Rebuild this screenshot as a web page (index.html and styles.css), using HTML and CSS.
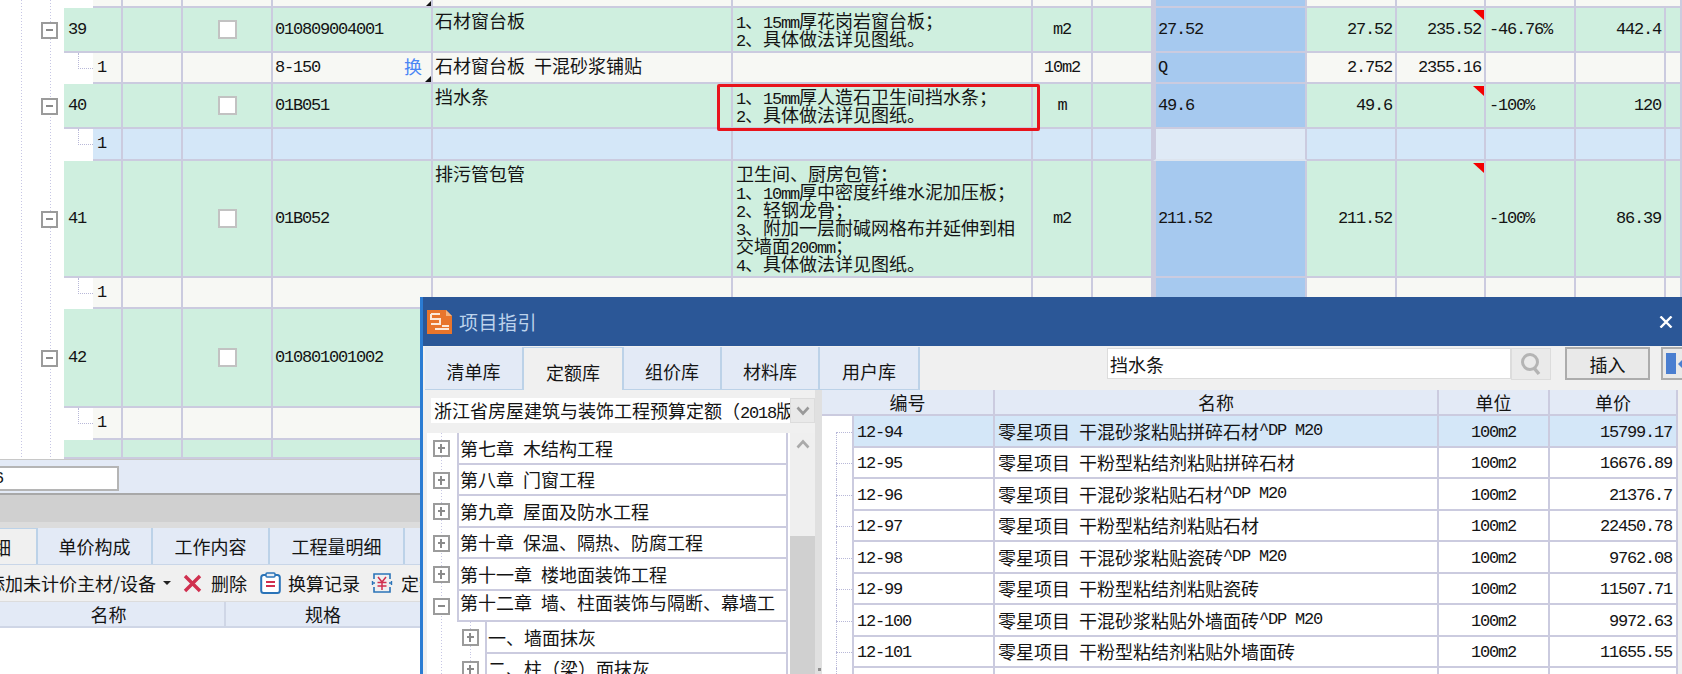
FILE: index.html
```html
<!DOCTYPE html>
<html lang="zh-CN">
<head>
    <meta charset="UTF-8">
    <meta name="viewport" content="width=device-width, initial-scale=1.0">
    <title>项目指引</title>
    <link rel="stylesheet" href="styles.css">
</head>
<body>
    <section class="sheet">
        <div class="row sub sliver">
            <div class="seq"><span class="gutter"></span><span class="no"></span></div>
            <div class="cell"></div><div class="cell"></div>
            <div class="cell code"><i class="mark-black"></i></div>
            <div class="cell"></div><div class="cell"></div><div class="cell"></div><div class="cell"></div>
            <div class="cell qty"></div><div class="cell"></div><div class="cell"></div><div class="cell"></div><div class="cell"></div>
        </div>

        <div class="row item h45">
            <div class="seq"><span class="gutter"><span class="fold"></span></span><span class="no n">39</span></div>
            <div class="cell"></div>
            <div class="cell check"><span class="box"></span></div>
            <div class="cell code n">010809004001</div>
            <div class="cell text">石材窗台板</div>
            <div class="cell text desc"><span class="n">1</span>、<span class="n">15mm</span>厚花岗岩窗台板；<br><span class="n">2</span>、具体做法详见图纸。</div>
            <div class="cell unit n">m2</div>
            <div class="cell"></div>
            <div class="cell qty n">27.52</div>
            <div class="cell right n">27.52</div>
            <div class="cell right n"><i class="mark-red"></i>235.52</div>
            <div class="cell left n">-46.76%</div>
            <div class="cell right n">442.4</div>
            <div class="cell"></div>
        </div>
        <div class="row sub h31">
            <div class="seq"><span class="gutter elbow"></span><span class="no n">1</span></div>
            <div class="cell"></div>
            <div class="cell"></div>
            <div class="cell code n">8-150<span class="swap">换</span><i class="mark-black"></i></div>
            <div class="cell text">石材窗台板 干混砂浆铺贴</div>
            <div class="cell"></div>
            <div class="cell unit n">10m2</div>
            <div class="cell"></div>
            <div class="cell qty n">Q</div>
            <div class="cell right n">2.752</div>
            <div class="cell right n">2355.16</div>
            <div class="cell"></div>
            <div class="cell"></div>
            <div class="cell"></div>
        </div>

        <div class="row item h45">
            <div class="seq"><span class="gutter"><span class="fold"></span></span><span class="no n">40</span></div>
            <div class="cell"></div>
            <div class="cell check"><span class="box"></span></div>
            <div class="cell code n">01B051</div>
            <div class="cell text">挡水条</div>
            <div class="cell text desc"><span class="n">1</span>、<span class="n">15mm</span>厚人造石卫生间挡水条；<br><span class="n">2</span>、具体做法详见图纸。</div>
            <div class="cell unit n">m</div>
            <div class="cell"></div>
            <div class="cell qty n">49.6</div>
            <div class="cell right n">49.6</div>
            <div class="cell right n"><i class="mark-red"></i></div>
            <div class="cell left n">-100%</div>
            <div class="cell right n">120</div>
            <div class="cell"></div>
        </div>
        <div class="row sub picked h32">
            <div class="seq"><span class="gutter elbow"></span><span class="no n">1</span></div>
            <div class="cell"></div><div class="cell"></div><div class="cell"></div><div class="cell"></div><div class="cell"></div><div class="cell"></div><div class="cell"></div>
            <div class="cell qty"></div>
            <div class="cell"></div><div class="cell"></div><div class="cell"></div><div class="cell"></div><div class="cell"></div>
        </div>

        <div class="row item h117">
            <div class="seq"><span class="gutter"><span class="fold"></span></span><span class="no n">41</span></div>
            <div class="cell"></div>
            <div class="cell check"><span class="box"></span></div>
            <div class="cell code n">01B052</div>
            <div class="cell text">排污管包管</div>
            <div class="cell text desc">卫生间、厨房包管：<br><span class="n">1</span>、<span class="n">10mm</span>厚中密度纤维水泥加压板；<br><span class="n">2</span>、轻钢龙骨；<br><span class="n">3</span>、附加一层耐碱网格布并延伸到相<br>交墙面<span class="n">200mm</span>；<br><span class="n">4</span>、具体做法详见图纸。</div>
            <div class="cell unit n">m2</div>
            <div class="cell"></div>
            <div class="cell qty n">211.52</div>
            <div class="cell right n">211.52</div>
            <div class="cell right n"><i class="mark-red"></i></div>
            <div class="cell left n">-100%</div>
            <div class="cell right n">86.39</div>
            <div class="cell"></div>
        </div>
        <div class="row sub h31">
            <div class="seq"><span class="gutter elbow"></span><span class="no n">1</span></div>
            <div class="cell"></div><div class="cell"></div><div class="cell"></div><div class="cell"></div><div class="cell"></div><div class="cell"></div><div class="cell"></div>
            <div class="cell qty"></div>
            <div class="cell"></div><div class="cell"></div><div class="cell"></div><div class="cell"></div><div class="cell"></div>
        </div>

        <div class="row item h99">
            <div class="seq"><span class="gutter"><span class="fold"></span></span><span class="no n">42</span></div>
            <div class="cell"></div>
            <div class="cell check"><span class="box"></span></div>
            <div class="cell code n">010801001002</div>
            <div class="cell"></div><div class="cell"></div><div class="cell"></div><div class="cell"></div>
            <div class="cell qty"></div>
            <div class="cell"></div><div class="cell"></div><div class="cell"></div><div class="cell"></div><div class="cell"></div>
        </div>
        <div class="row sub h32">
            <div class="seq"><span class="gutter elbow"></span><span class="no n">1</span></div>
            <div class="cell"></div><div class="cell"></div><div class="cell"></div><div class="cell"></div><div class="cell"></div><div class="cell"></div><div class="cell"></div>
            <div class="cell qty"></div>
            <div class="cell"></div><div class="cell"></div><div class="cell"></div><div class="cell"></div><div class="cell"></div>
        </div>
        <div class="row item h19">
            <div class="seq"><span class="gutter"></span><span class="no"></span></div>
            <div class="cell"></div><div class="cell"></div><div class="cell"></div><div class="cell"></div><div class="cell"></div><div class="cell"></div><div class="cell"></div>
            <div class="cell qty"></div>
            <div class="cell"></div><div class="cell"></div><div class="cell"></div><div class="cell"></div><div class="cell"></div>
        </div>

        <div class="red-box"></div>
    </section>

    <section class="lower">
        <div class="filter-bar"><div class="filter-input n">6</div></div>
        <div class="gray-band"></div>
        <div class="lower-tabs">
            <div class="lower-tab active">细</div>
            <div class="lower-tab w115">单价构成</div>
            <div class="lower-tab w117">工作内容</div>
            <div class="lower-tab w135">工程量明细</div>
        </div>
        <div class="toolbar">
            <span class="tool-first">添加未计价主材/设备</span>
            <span class="caret"></span>
            <svg class="tool-x" width="19" height="19" viewBox="0 0 19 19"><path d="M2 2l15 15M17 2L2 17" stroke="#d0304f" stroke-width="3.4" fill="none"/></svg>
            <span class="tool-del">删除</span>
            <svg class="tool-clip" width="21" height="22" viewBox="0 0 21 22"><rect x="1.2" y="3" width="18.6" height="18" rx="2.5" fill="#fff" stroke="#2b74b8" stroke-width="2"/><rect x="6" y="1" width="9" height="4" rx="1" fill="#e8eef6" stroke="#2b74b8" stroke-width="1.5"/><path d="M6 10h9M6 14h9" stroke="#d0304f" stroke-width="2"/></svg>
            <span class="tool-rec">换算记录</span>
            <svg class="tool-yen" width="22" height="22" viewBox="0 0 22 22"><path d="M3 7V2h16v5M3 15v5h16v-5" fill="none" stroke="#2b74b8" stroke-width="1.6"/><path d="M1 11h3M18 11h3M1.500 9v4M20.500 9v4" stroke="#2b74b8" stroke-width="1.400"/><path d="M7 5l4 5 4-5M6.500 10.500h9M6.500 14h9M11 10v8" fill="none" stroke="#d0304f" stroke-width="1.500"/></svg>
            <span>定额</span>
        </div>
        <div class="lower-head">
            <div class="head-name">名称</div>
            <div class="head-spec">规格</div>
        </div>
    </section>

    <section class="guide">
        <header class="guide-title">
            <svg width="25" height="25" viewBox="0 0 25 25">
                <path d="M0 1h19l6 6v18H0z" fill="#e8752c"/>
                <path d="M19 1l6 6h-6z" fill="#f4b27c"/>
                <path d="M4 5h9M4 5v5h9v5H4M15 17h7M8 20h14" stroke="#fbe9da" stroke-width="2" fill="none"/>
            </svg>
            <h1>项目指引</h1>
            <svg class="guide-close" width="14" height="12" viewBox="0 0 14 12"><path d="M1.500 0.500l11 11M12.500 0.500l-11 11" stroke="#fff" stroke-width="2.400"/></svg>
        </header>

        <div class="guide-strip">
            <div class="guide-tab w99">清单库</div>
            <div class="guide-tab w100 active">定额库</div>
            <div class="guide-tab w98">组价库</div>
            <div class="guide-tab w98">材料库</div>
            <div class="guide-tab w100">用户库</div>
            <div class="search-input">挡水条</div>
            <div class="search-btn">
                <svg width="22" height="24" viewBox="0 0 22 24"><circle cx="10" cy="10" r="7.500" fill="none" stroke="#b4b4b4" stroke-width="3"/><path d="M14 16l5 6" stroke="#b4b4b4" stroke-width="3.500"/></svg>
            </div>
            <div class="insert-btn">插入</div>
            <div class="next-btn"><span class="next-block"></span><span class="next-arrow"></span></div>
        </div>

        <div class="guide-body">
            <div class="lib">
                <div class="combo">
                    <div class="combo-text">浙江省房屋建筑与装饰工程预算定额（<span class="n">2018</span>版</div>
                    <div class="combo-btn"><svg width="14" height="10" viewBox="0 0 14 10"><path d="M1.500 1.500L7 7.500l5.500-6" fill="none" stroke="#999" stroke-width="2.600"/></svg></div>
                </div>
                <div class="lib-main">
                    <div class="chapters">
                        <div class="chapter"><span class="chapter-gutter"><span class="fold plus"></span></span><span class="chapter-name">第七章 木结构工程</span></div>
                        <div class="chapter"><span class="chapter-gutter"><span class="fold plus"></span></span><span class="chapter-name">第八章 门窗工程</span></div>
                        <div class="chapter"><span class="chapter-gutter"><span class="fold plus"></span></span><span class="chapter-name">第九章 屋面及防水工程</span></div>
                        <div class="chapter"><span class="chapter-gutter"><span class="fold plus"></span></span><span class="chapter-name">第十章 保温、隔热、防腐工程</span></div>
                        <div class="chapter"><span class="chapter-gutter"><span class="fold plus"></span></span><span class="chapter-name">第十一章 楼地面装饰工程</span></div>
                        <div class="chapter open"><span class="chapter-gutter"><span class="fold"></span></span><span class="chapter-name">第十二章 墙、柱面装饰与隔断、幕墙工</span></div>
                        <div class="chapter child"><span class="chapter-gutter"><span class="fold plus"></span></span><span class="chapter-name">一、墙面抹灰</span></div>
                        <div class="chapter child"><span class="chapter-gutter"><span class="fold plus"></span></span><span class="chapter-name">二、柱（梁）面抹灰</span></div>
                    </div>
                    <div class="scroll">
                        <div class="scroll-thumb"><svg width="14" height="10" viewBox="0 0 14 10"><path d="M1.500 8.500L7 2.500l5.500 6" fill="none" stroke="#aaa" stroke-width="2.600"/></svg></div>
                    </div>
                </div>
            </div>
            <div class="splitter"><span class="splitter-dot"></span></div>

            <div class="quota">
                <div class="quota-row quota-head">
                    <div class="q-code-head">编号</div>
                    <div class="q-cell center">名称</div>
                    <div class="q-cell center">单位</div>
                    <div class="q-cell center">单价</div>
                </div>
                <div class="quota-row selected first">
                    <div class="q-leaf"></div><div class="q-cell q-code n">12-94</div>
                    <div class="q-cell">零星项目 干混砂浆粘贴拼碎石材<span class="n">^DP M20</span></div>
                    <div class="q-cell center n">100m2</div><div class="q-cell num n">15799.17</div>
                </div>
                <div class="quota-row">
                    <div class="q-leaf"></div><div class="q-cell q-code n">12-95</div>
                    <div class="q-cell">零星项目 干粉型粘结剂粘贴拼碎石材</div>
                    <div class="q-cell center n">100m2</div><div class="q-cell num n">16676.89</div>
                </div>
                <div class="quota-row">
                    <div class="q-leaf"></div><div class="q-cell q-code n">12-96</div>
                    <div class="q-cell">零星项目 干混砂浆粘贴石材<span class="n">^DP M20</span></div>
                    <div class="q-cell center n">100m2</div><div class="q-cell num n">21376.7</div>
                </div>
                <div class="quota-row">
                    <div class="q-leaf"></div><div class="q-cell q-code n">12-97</div>
                    <div class="q-cell">零星项目 干粉型粘结剂粘贴石材</div>
                    <div class="q-cell center n">100m2</div><div class="q-cell num n">22450.78</div>
                </div>
                <div class="quota-row">
                    <div class="q-leaf"></div><div class="q-cell q-code n">12-98</div>
                    <div class="q-cell">零星项目 干混砂浆粘贴瓷砖<span class="n">^DP M20</span></div>
                    <div class="q-cell center n">100m2</div><div class="q-cell num n">9762.08</div>
                </div>
                <div class="quota-row">
                    <div class="q-leaf"></div><div class="q-cell q-code n">12-99</div>
                    <div class="q-cell">零星项目 干粉型粘结剂粘贴瓷砖</div>
                    <div class="q-cell center n">100m2</div><div class="q-cell num n">11507.71</div>
                </div>
                <div class="quota-row">
                    <div class="q-leaf"></div><div class="q-cell q-code n">12-100</div>
                    <div class="q-cell">零星项目 干混砂浆粘贴外墙面砖<span class="n">^DP M20</span></div>
                    <div class="q-cell center n">100m2</div><div class="q-cell num n">9972.63</div>
                </div>
                <div class="quota-row">
                    <div class="q-leaf"></div><div class="q-cell q-code n">12-101</div>
                    <div class="q-cell">零星项目 干粉型粘结剂粘贴外墙面砖</div>
                    <div class="q-cell center n">100m2</div><div class="q-cell num n">11655.55</div>
                </div>
                <div class="quota-row">
                    <div class="q-leaf"></div><div class="q-cell q-code"></div>
                    <div class="q-cell"></div><div class="q-cell"></div><div class="q-cell"></div>
                </div>
            </div>
        </div>
    </section>
</body>
</html>
```

FILE: styles.css
```css
* {
    margin: 0;
    padding: 0;
    box-sizing: border-box;
}

html, body {
    width: 1682px;
    height: 674px;
    overflow: hidden;
}

body {
    position: relative;
    background-color: #fff;
    color: #141414;
    font-family: "Noto Sans CJK SC", "Liberation Sans", sans-serif;
    font-size: 18px;
    line-height: 18px;
    word-spacing: 5px;
}

/* half-width digits and latin, squeezed to the 9px advance of the cjk half cell */
.n {
    font-family: "Liberation Mono", monospace;
    font-size: 17px;
    letter-spacing: -1.2px;
    word-spacing: 0;
}

.text .n,
.combo-text .n,
.q-cell .n {
    line-height: 0;
}

/* ---- main sheet ---- */
.sheet {
    position: relative;
    height: 459px;
    overflow: hidden;
    background-image:
        linear-gradient(#c6c6e4 50%, transparent 50%),
        linear-gradient(#c6c6e4 50%, transparent 50%);
    background-size: 1px 3px;
    background-position: 21px 0, 50px 0;
    background-repeat: repeat-y;
}

.row {
    display: grid;
    grid-template-columns: 123px 60px 90px 160px 300px 300px 60px 60px 154px 90px 89px 90px 90px 16px;
}

.item { --bg: #cfefdf; }
.sub { --bg: #f7f8f4; }
.picked { --bg: #d4e7f8; }

.sliver { height: 8px; grid-template-columns: 123px 60px 90px 160px 300px 300px 60px 60px 154px 90px 89px 90px 106px; }
.h19 { height: 19px; }
.h31 { height: 31px; }
.h32 { height: 32px; }
.h45 { height: 45px; }
.h99 { height: 99px; }
.h117 { height: 117px; }

.seq {
    display: flex;
}

.gutter {
    position: relative;
    display: flex;
    align-items: center;
    justify-content: flex-end;
    width: 64px;
    flex-shrink: 0;
    padding-right: 6px;
}

.sub .gutter {
    width: 93px;
}

.elbow::before {
    content: "";
    position: absolute;
    left: 78px;
    top: 0;
    width: 14px;
    height: 15px;
    border-left: 1px dotted #b8b8d8;
    border-bottom: 1px dotted #b8b8d8;
}

.no {
    flex: 1;
    display: flex;
    align-items: center;
    padding-left: 4px;
    background-color: var(--bg);
    border-right: 2px solid #cbcbdf;
    border-bottom: 2px solid #cbcbdf;
}

.fold {
    position: relative;
    display: block;
    width: 17px;
    height: 17px;
    background-color: #fff;
    border: 2px solid #9b9b9b;
    flex-shrink: 0;
}

.fold::before {
    content: "";
    position: absolute;
    left: 3px;
    right: 3px;
    top: 5px;
    height: 2px;
    background-color: #8a8a8a;
}

.fold.plus::after {
    content: "";
    position: absolute;
    top: 2px;
    bottom: 2px;
    left: 5px;
    width: 2px;
    background-color: #8a8a8a;
}

.cell {
    position: relative;
    display: flex;
    align-items: center;
    background-color: var(--bg);
    border-right: 2px solid #cbcbdf;
    border-bottom: 2px solid #cbcbdf;
    white-space: nowrap;
    overflow: hidden;
}

.code { padding-left: 2px; }

.text {
    display: block;
    padding: 3px 0 0 2px;
    line-height: 18px;
}

.desc { padding-left: 3px; }

.unit { justify-content: center; }
.left { padding-left: 3px; }

.right {
    justify-content: flex-end;
    padding-right: 3px;
}

.check { justify-content: center; }

.box {
    display: block;
    width: 19px;
    height: 19px;
    background-color: #fff;
    border: 2px solid #c2c2c2;
}

.qty {
    background-color: #a6c9ef;
    border-left: 3px solid #cbcbdf;
    padding-left: 2px;
}

.picked .qty {
    background-color: #dfeaf6;
    border-bottom-color: #dde4ee;
}

.swap {
    position: absolute;
    right: 9px;
    top: 4px;
    font-family: "Noto Sans CJK SC", sans-serif;
    font-size: 18px;
    letter-spacing: 0;
    color: #4a86f5;
}

.mark-black {
    position: absolute;
    right: 0;
    bottom: 0;
    border-left: 6px solid transparent;
    border-bottom: 6px solid #111;
}

.sliver .mark-black {
    bottom: 0;
    border-left-width: 5px;
    border-bottom-width: 5px;
}

.mark-red {
    position: absolute;
    right: 0;
    top: 2px;
    border-left: 11px solid transparent;
    border-top: 10px solid #f40000;
}

.red-box {
    position: absolute;
    left: 717px;
    top: 84px;
    width: 323px;
    height: 47px;
    border: 3px solid #e8141c;
    border-radius: 2px;
}

/* ---- panel under the sheet ---- */
.filter-bar {
    height: 36px;
    background-color: #e3eaf6;
    border-top: 1px solid #c8c8c8;
    border-bottom: 2px solid #a8a8a8;
    padding-top: 6px;
}

.filter-input {
    display: flex;
    align-items: center;
    justify-content: flex-start;
    width: 119px;
    height: 25px;
    background-color: #fff;
    border: 2px solid #b5b5b5;
    border-left: 0;
    text-indent: -6px;
}

.gray-band {
    height: 33px;
    background-color: #d0d0d0;
    border-bottom: 6px solid #dcdcdc;
}

.lower-tabs {
    display: flex;
    height: 37px;
    background-color: #e3eaf6;
    border-bottom: 1px solid #c9d6e8;
}

.lower-tab {
    display: flex;
    align-items: center;
    justify-content: center;
    border-right: 2px solid #bcd2e8;
}

.lower-tab.active {
    justify-content: flex-end;
    width: 38px;
    padding-right: 25px;
    background-color: #f0f0f0;
    border-top: 1px solid #bcd2e8;
    white-space: nowrap;
}

.w115 { width: 115px; }
.w117 { width: 117px; }
.w135 { width: 135px; }

.toolbar {
    display: flex;
    align-items: center;
    height: 36px;
    background-color: #f0f0f0;
    white-space: nowrap;
}

.tool-first { margin-left: -13px; }

.caret {
    margin-left: 7px;
    border-left: 4px solid transparent;
    border-right: 4px solid transparent;
    border-top: 4px solid #222;
}

.tool-x { margin-left: 12px; }
.tool-del { margin-left: 9px; }
.tool-clip { margin-left: 13px; }
.tool-rec { margin-left: 7px; }
.tool-yen { margin-left: 11px; }
.tool-yen + span { margin-left: 8px; }

.lower-head {
    display: flex;
    height: 27px;
    align-items: center;
    background-color: #e3eaf6;
    border-top: 1px solid #dcdcdc;
    border-bottom: 2px solid #cfd6e6;
    text-align: center;
}

.head-name {
    width: 226px;
    height: 100%;
    line-height: 24px;
    border-right: 2px solid #cfd6e6;
    padding-right: 7px;
}

.head-spec {
    width: 194px;
    line-height: 24px;
}

/* ---- floating dialog ---- */
.guide {
    position: absolute;
    left: 420px;
    top: 297px;
    width: 1262px;
    height: 377px;
    overflow: hidden;
    background-color: #f0f0f0;
    border-left: 3px solid #2b7cd3;
}

.guide-title {
    display: flex;
    align-items: center;
    height: 49px;
    padding-left: 4px;
    background-color: #2b5797;
}

.guide-title h1 {
    margin-left: 7px;
    font-size: 19px;
    font-weight: normal;
    letter-spacing: 0.5px;
    color: #bdd3ec;
}

.guide-close {
    margin-left: auto;
    margin-right: 9px;
}

.guide-strip {
    display: flex;
    height: 44px;
    padding: 1px 0 0 2px;
    white-space: nowrap;
}

.guide-strip > div {
    flex-shrink: 0;
}

.guide-tab {
    display: flex;
    align-items: center;
    justify-content: center;
    height: 43px;
    padding-top: 5px;
    background-color: #e3eaf6;
    border-right: 2px solid #bcd2e8;
    border-bottom: 1px solid #bcd2e8;
}

.guide-tab.active {
    background-color: #f0f0f0;
    border-bottom: 0;
    border-top: 1px solid #bcd2e8;
}

.w99 { width: 99px; }
.w100 { width: 100px; }
.w98 { width: 98px; }

.search-input {
    width: 404px;
    height: 31px;
    margin: 1px 0 0 187px;
    padding: 6px 0 0 2px;
    background-color: #fff;
    border: 1px solid #dcdcdc;
}

.search-btn {
    display: flex;
    align-items: center;
    justify-content: center;
    width: 40px;
    height: 32px;
    margin-top: 1px;
    background-color: #eaeaea;
    border: 1px solid #dcdcdc;
}

.insert-btn {
    display: flex;
    align-items: center;
    justify-content: center;
    width: 85px;
    height: 33px;
    margin: 0 0 0 14px;
    background-color: #e9e9e9;
    border: 2px solid #acacac;
}

.next-btn {
    display: flex;
    align-items: center;
    width: 30px;
    height: 33px;
    margin-left: 11px;
    padding-left: 3px;
    background-color: #e9e9e9;
    border: 2px solid #acacac;
}

.next-block {
    display: block;
    width: 10px;
    height: 21px;
    background-color: #4a7ed0;
}

.next-arrow {
    margin-left: 2px;
    border-top: 5px solid transparent;
    border-bottom: 5px solid transparent;
    border-right: 5px solid #4a7ed0;
}

.guide-body {
    display: flex;
    height: 284px;
}

.lib {
    width: 392px;
    flex-shrink: 0;
}

.combo {
    display: flex;
    height: 25px;
    margin: 8px 0 10px 8px;
}

.combo-text {
    width: 359px;
    padding: 3px 0 0 3px;
    background-color: #fff;
    white-space: nowrap;
    overflow: hidden;
}

.combo-btn {
    display: flex;
    align-items: center;
    justify-content: center;
    flex: 1;
    background-color: #e9e9e9;
    border: 1px solid #dcdcdc;
}

.lib-main {
    display: flex;
    height: 241px;
    margin-left: 4px;
}

.chapters {
    width: 363px;
    background-color: #fff;
    background-image: linear-gradient(#c6c6e4 50%, transparent 50%);
    background-size: 1px 3px;
    background-position: 14px 0;
    background-repeat: repeat-y;
}

.chapter {
    display: flex;
    height: 31.5px;
}

.chapter-gutter {
    display: flex;
    align-items: center;
    width: 30px;
    flex-shrink: 0;
    padding-left: 6px;
}

.chapter-name {
    flex: 1;
    display: flex;
    align-items: center;
    padding-left: 1px;
    margin-right: 2px;
    background-color: #fff;
    border-left: 2px solid #cbcbdf;
    border-right: 2px solid #cbcbdf;
    border-bottom: 2px solid #cbcbdf;
    white-space: pre;
    overflow: hidden;
}

.open .chapter-name {
    padding-bottom: 6px;
}

.child .chapter-gutter {
    width: 58px;
    padding-left: 35px;
    background-image: linear-gradient(#c6c6e4 50%, transparent 50%);
    background-size: 1px 3px;
    background-position: 43px 0;
    background-repeat: repeat-y;
}

.scroll {
    flex: 1;
    background-color: #d0d0d0;
}

.scroll-thumb {
    display: flex;
    justify-content: center;
    height: 103px;
    padding-top: 6px;
    background-color: #efefef;
}

.splitter {
    position: relative;
    width: 7px;
    background-color: #e0e0e0;
}

.splitter-dot {
    position: absolute;
    left: 3px;
    bottom: 3px;
    width: 3px;
    height: 3px;
    background-color: #8f8f8f;
}

.quota {
    width: 856px;
    background-color: #fff;
}

.quota-row {
    display: grid;
    grid-template-columns: 30px 143px 444px 111px 128px;
    height: 31.500px;
    white-space: nowrap;
}

.quota-head {
    display: grid;
    grid-template-columns: 173px 444px 111px 128px;
    height: 26px;
    background-color: #e3eaf6;
    border-bottom: 2px solid #cbcbdf;
}

.q-code-head {
    display: flex;
    align-items: center;
    justify-content: center;
    border-right: 2px solid #cbcbdf;
}

.quota-head .q-cell {
    border-bottom: 0;
}

.q-leaf {
    position: relative;
}

.q-leaf::before {
    content: "";
    position: absolute;
    left: 14px;
    top: 0;
    bottom: 0;
    border-left: 1px dotted #b8b8d8;
}

.q-leaf::after {
    content: "";
    position: absolute;
    left: 14px;
    right: 0;
    top: 50%;
    border-top: 1px dotted #b8b8d8;
}

.first .q-leaf::before {
    top: 50%;
}

.q-cell {
    display: flex;
    align-items: center;
    padding-left: 3px;
    border-right: 2px solid #cbcbdf;
    border-bottom: 2px solid #cbcbdf;
    overflow: hidden;
}

.q-cell.n {
    padding-top: 4px;
}

.q-code {
    padding-left: 3px;
    border-left: 2px solid #cbcbdf;
}

.center {
    justify-content: center;
    padding-left: 0;
}

.num {
    justify-content: flex-end;
    padding-right: 4px;
}

.selected .q-cell {
    background-color: #d4e7f8;
}
```
